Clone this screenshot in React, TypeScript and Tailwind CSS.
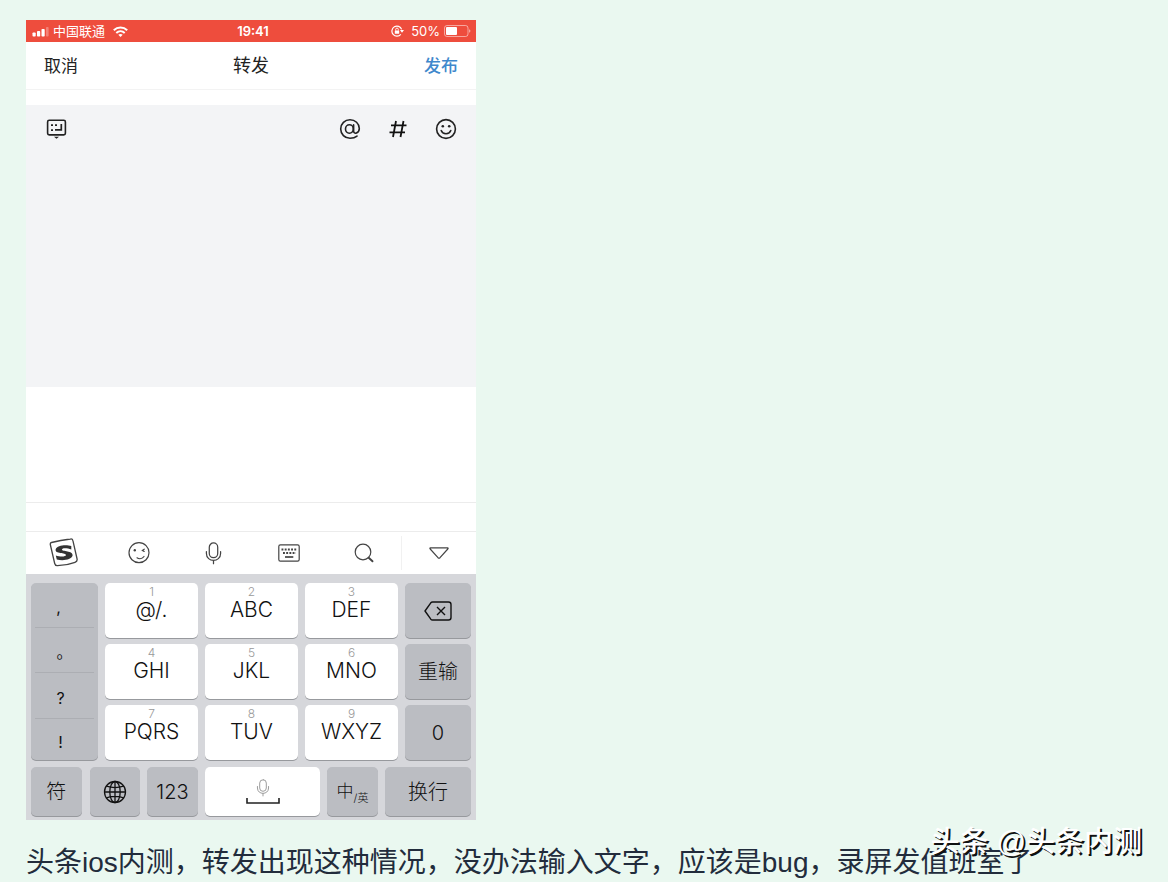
import React from "react";

const CJK = "font-['Inter','Noto_Sans_CJK_SC',sans-serif]";

function StatusBar() {
  return (
    <div className="relative flex h-[22px] items-center justify-between bg-[#ee4d3d] pl-[6px] pr-[5px] text-[13px] leading-[22px] text-white">
      <div className="flex items-center gap-1">
        <svg width="17" height="11" viewBox="0 0 17 11" fill="#fff" aria-hidden="true">
          <rect x="0.5" y="6.5" width="3.2" height="4" rx="0.8" />
          <rect x="5" y="5" width="3.2" height="5.5" rx="0.8" />
          <rect x="9.5" y="3" width="3.2" height="7.5" rx="0.8" />
          <rect x="14" y="1" width="2.6" height="9.5" rx="0.8" opacity="0.3" />
        </svg>
        <span>中国联通</span>
        <svg className="ml-1" width="15" height="11" viewBox="0 0 15 11" fill="none" stroke="#fff" strokeWidth="2" aria-hidden="true">
          <path d="M0.8 4.3C4.6 0.6 10.4 0.6 14.2 4.3" />
          <path d="M3.3 7C5.7 4.8 9.3 4.8 11.7 7" />
          <path d="M7.5 11L5.3 8.7C6.5 7.7 8.5 7.7 9.7 8.7Z" fill="#fff" stroke="none" />
        </svg>
      </div>
      <span className="absolute inset-x-0 top-0 mx-auto w-fit pl-1 font-semibold">19:41</span>
      <div className="flex items-center gap-[4px]">
        <svg className="mr-[3px]" width="13" height="12" viewBox="0 0 13 12" fill="none" stroke="#fff" strokeWidth="1.2" aria-hidden="true">
          <path d="M10.6 4.4A5 5 0 1 0 9.8 9.3" />
          <path d="M8.9 5H13L11 7.8Z" fill="#fff" stroke="none" />
          <rect x="3.8" y="5.4" width="4.4" height="3.4" rx="0.5" fill="#fff" stroke="none" />
          <path d="M4.7 5.6V4.4A1.3 1.3 0 0 1 7.3 4.4V5.6" strokeWidth="0.9" />
        </svg>
        <span>50%</span>
        <svg width="27" height="12" viewBox="0 0 27 12" fill="none" aria-hidden="true">
          <rect x="0.5" y="0.5" width="23.5" height="11" rx="2.5" stroke="#fff" strokeOpacity="0.5" />
          <rect x="2" y="2" width="11" height="8" rx="1" fill="#fff" />
          <path d="M25.200 4.200C26.800 4.800 26.800 7.200 25.200 7.800Z" fill="#fff" opacity="0.6" />
        </svg>
      </div>
    </div>
  );
}

function NavBar() {
  return (
    <header className="grid h-12 grid-cols-3 items-center border-b border-[#f3f3f3] px-[18px] text-[17px] leading-6 text-[#222]">
      <button className="justify-self-start">取消</button>
      <h1 className="justify-self-center text-[18px]">转发</h1>
      <button className="justify-self-end font-medium text-[#3f88cc]">发布</button>
    </header>
  );
}

function ComposerTools() {
  return (
    <section className="h-[282px] bg-[#f3f4f6] pl-5 pr-[19px] pt-3">
      <div className="flex h-6 items-center justify-between">
        <button aria-label="收起键盘">
          <svg width="22" height="22" viewBox="0 0 22 22" fill="none" stroke="#222" strokeWidth="1.6" aria-hidden="true">
            <rect x="1.6" y="2.3" width="17.8" height="14.6" rx="1.6" />
            <path d="M8 18.7H13L10.5 20.7Z" fill="#222" stroke="none" />
            <path d="M5 7.1H7M9 7.1H11M5 12.1H7M9 11.9H15.3V6.1" strokeWidth="1.7" />
          </svg>
        </button>
        <div className="flex items-center gap-[26px]">
          <button aria-label="提到某人">
            <svg width="22" height="22" viewBox="0 0 22 22" fill="none" stroke="#222" strokeWidth="1.6" strokeLinecap="round" aria-hidden="true">
              <ellipse cx="10.4" cy="11" rx="3.9" ry="4.2" />
              <path d="M14.6 6.8V13C14.6 14.9 16 15.6 17.4 15C19.2 14.2 20.3 12.3 20.3 10.4C20.2 5.6 16.2 1.7 11 1.7A9.3 9.3 0 1 0 11 20.3C14 20.3 16.2 19.6 18 18.1" />
            </svg>
          </button>
          <button aria-label="添加话题">
            <svg width="22" height="22" viewBox="0 0 22 22" fill="none" stroke="#111" strokeWidth="1.8" aria-hidden="true">
              <path d="M4 7.3H19.5M2.5 14.3H18M9 3L6 19M16.5 3L13.5 19" />
            </svg>
          </button>
          <button aria-label="表情">
            <svg width="22" height="22" viewBox="0 0 22 22" fill="none" stroke="#222" strokeWidth="1.6" strokeLinecap="round" aria-hidden="true">
              <circle cx="11" cy="11" r="9.4" />
              <path d="M6.2 12.6C7.6 16.7 14.4 16.7 15.8 12.6" />
              <circle cx="7.8" cy="8.2" r="1.3" fill="#222" stroke="none" />
              <circle cx="14.2" cy="8.2" r="1.3" fill="#222" stroke="none" />
            </svg>
          </button>
        </div>
      </div>
    </section>
  );
}

function Microphone({ stroke, size }: { stroke: string; size: number }) {
  return (
    <svg width={size} height={size} viewBox="0 0 24 24" fill="none" stroke={stroke} strokeWidth="1.3" strokeLinecap="round" aria-hidden="true">
      <rect x="7.6" y="1" width="8.8" height="15.4" rx="4.4" />
      <path d="M4.6 10V12C4.6 21.5 19.4 21.5 19.4 12V10M12 19.4V22.6" />
    </svg>
  );
}

function KeyboardToolbar() {
  const item = "flex items-center justify-center";
  return (
    <div className="grid h-[43px] grid-cols-6 border-t border-[#ececec] bg-white">
      <button className={item} aria-label="输入法">
        <svg width="30" height="30" viewBox="0 0 30 30" fill="none" stroke="#444" strokeWidth="1.3" strokeLinejoin="round" aria-hidden="true">
          <path d="M2.500 4.500Q1 4.900 1.300 6.500L5.700 25.500Q6.300 27.900 8.500 27.700Q17.500 27.500 26 24.300Q28.500 23.300 28.100 21L23.900 2.700Q23.500 0.700 21.500 1Q11.500 2.100 2.500 4.500Z" />
          <path
            d="M22.300 8.100C17.500 6.400 8 7.100 6.700 11.200C5.300 16.200 17.300 14.300 17 17.100C16.700 19.100 10.500 18.900 6.800 17.400L7.800 21.400C13 23.200 22.800 22 23.600 17.600C24.300 12.300 12.800 13.800 13 11.500C13.300 9.700 18.800 10.200 22.300 11.500Z"
            fill="#333"
            stroke="none"
          />
        </svg>
      </button>
      <button className={item} aria-label="表情">
        <svg width="22" height="22" viewBox="0 0 22 22" fill="none" stroke="#444" strokeWidth="1.2" strokeLinecap="round" aria-hidden="true">
          <circle cx="11" cy="10.700" r="10" />
          <circle cx="6.800" cy="8.200" r="1.200" fill="#444" stroke="none" />
          <path d="M16.200 7.200L14.400 8.400L16.200 9.400M9 15.800C11.500 17.500 14.500 16.500 16 14.500" />
        </svg>
      </button>
      <button className={item} aria-label="语音">
        <Microphone stroke="#444" size={23} />
      </button>
      <button className={item} aria-label="键盘">
        <svg width="22" height="18" viewBox="0 0 22 18" fill="none" stroke="#444" strokeWidth="1.2" aria-hidden="true">
          <rect x="0.8" y="0.8" width="20.400" height="16.400" rx="1.600" />
          <path d="M3.500 5.500H19" strokeWidth="1.800" strokeDasharray="1.900 1.300" />
          <path d="M5 9H18" strokeWidth="1.800" strokeDasharray="1.900 1.300" />
          <path d="M7 13H15.300" strokeWidth="1.700" />
        </svg>
      </button>
      <button className={item} aria-label="搜索">
        <svg width="20" height="20" viewBox="0 0 20 20" fill="none" stroke="#444" strokeWidth="1.200" strokeLinecap="round" aria-hidden="true">
          <circle cx="9" cy="9" r="7.800" />
          <path d="M14.700 14.700L18.500 18.300" strokeWidth="1.900" />
        </svg>
      </button>
      <button className="my-1 flex items-center justify-center border-l border-[#f1f1f1]" aria-label="收起">
        <svg width="20" height="12" viewBox="0 0 20 12" fill="none" stroke="#444" strokeWidth="1.200" strokeLinejoin="round" aria-hidden="true">
          <path d="M1.500 0.800H18.500Q19.600 1 18.800 2L11 10.700Q10 11.600 9 10.700L1.200 2Q0.400 1 1.500 0.800Z" />
        </svg>
      </button>
    </div>
  );
}

const letterKeys = [
  ["1", "@/."],
  ["2", "ABC"],
  ["3", "DEF"],
  ["4", "GHI"],
  ["5", "JKL"],
  ["6", "MNO"],
  ["7", "PQRS"],
  ["8", "TUV"],
  ["9", "WXYZ"],
];

const greyKey =
  "flex items-center justify-center rounded-[5px] bg-[#bbbdc2] text-[20px] font-light text-[#111] shadow-[0_1px_0_#97999d]";

function Keyboard() {
  return (
    <div className="bg-[#d6d7db] px-[5px] pb-1 pt-[9px]">
      <div className="grid grid-cols-[67fr_293fr_66fr] gap-[7px]">
        <div className="grid grid-rows-[45fr_46fr_46fr_41fr] rounded-[5px] bg-[#bbbdc2] px-1 text-[16px] text-[#111] shadow-[0_1px_0_#97999d]">
          <button className="border-b border-[#acaeb3] pr-3 pt-1">,</button>
          <button className="border-b border-[#acaeb3] pt-1">。</button>
          <button className="border-b border-[#acaeb3] pr-2 pt-1">?</button>
          <button className="pr-2 pt-1">!</button>
        </div>
        <div className="grid auto-rows-[55px] grid-cols-3 gap-x-[7px] gap-y-[6px]">
          {letterKeys.map(([digit, letters]) => (
            <button
              key={digit}
              className="flex flex-col items-center rounded-[5px] bg-white pt-[2px] shadow-[0_1px_0_#97999d]"
            >
              <span className="text-[12px] font-light leading-[13px] text-[#999]">{digit}</span>
              <span className="text-[21px] font-light leading-6 text-[#111]">{letters}</span>
            </button>
          ))}
        </div>
        <div className="grid auto-rows-[55px] gap-[6px]">
          <button className={greyKey} aria-label="删除">
            <svg width="28" height="20" viewBox="0 0 28 20" fill="none" stroke="#111" strokeWidth="1.400" strokeLinejoin="round" aria-hidden="true">
              <path d="M8.500 1H24.500Q27 1 27 3.500V16.500Q27 19 24.500 19H8.500Q7.500 19 6.800 18.200L1 10L6.800 1.800Q7.500 1 8.500 1Z" />
              <path d="M13 6L21 14M21 6L13 14" />
            </svg>
          </button>
          <button className={greyKey}>重输</button>
          <button className={greyKey}>0</button>
        </div>
      </div>
      <div className="mt-[7px] grid h-[49px] grid-cols-[109fr_51fr_115fr_51fr_86fr] gap-[7px]">
        <div className="grid grid-cols-2 gap-2">
          <button className={greyKey}>符</button>
          <button className={greyKey} aria-label="切换输入法">
            <svg width="24" height="24" viewBox="0 0 24 24" fill="none" stroke="#111" strokeWidth="1.300" aria-hidden="true">
              <circle cx="12" cy="12" r="10.500" />
              <ellipse cx="12" cy="12" rx="5.200" ry="10.500" />
              <path d="M12 1.500V22.500M1.500 12H22.500M3.500 6.200Q12 9 20.500 6.200M3.500 17.800Q12 15 20.500 17.800" />
            </svg>
          </button>
        </div>
        <button className={greyKey}>123</button>
        <button
          className="flex flex-col items-center rounded-[5px] bg-white pt-3 shadow-[0_1px_0_#97999d]"
          aria-label="空格"
        >
          <Microphone stroke="#999" size={18} />
          <svg width="34" height="8" viewBox="0 0 34 8" fill="none" stroke="#222" strokeWidth="1.600" aria-hidden="true">
            <path d="M1 1V6H33V1" />
          </svg>
        </button>
        <button className={greyKey}>
          <span className="text-[17px]">中</span>
          <span className="pt-[14px] text-[11px]">/英</span>
        </button>
        <button className={greyKey}>换行</button>
      </div>
    </div>
  );
}

export default function App() {
  return (
    <main className={`relative min-h-screen overflow-hidden bg-[#eaf8f0] px-[26px] pt-5 ${CJK}`}>
      <div className="w-full max-w-[450px] bg-white">
        <StatusBar />
        <NavBar />
        <div className="h-[15px]" />
        <ComposerTools />
        <div className="h-[116px] border-b border-[#ececec]" />
        <div className="h-7" />
        <KeyboardToolbar />
        <Keyboard />
      </div>
      <p className="mt-[25px] font-['Liberation_Sans','Noto_Sans_CJK_SC',sans-serif] text-[28px] leading-9 text-[#222c3c]">
        头条ios内测，转发出现这种情况，没办法输入文字，应该是bug，录屏发值班室了
      </p>
      <div className="absolute bottom-5 right-[26px] font-['Liberation_Sans','Noto_Sans_CJK_SC',sans-serif] text-[29px] font-medium leading-10 text-white [text-shadow:2px_2px_0_#111]">
        头条 @头条内测
      </div>
    </main>
  );
}
